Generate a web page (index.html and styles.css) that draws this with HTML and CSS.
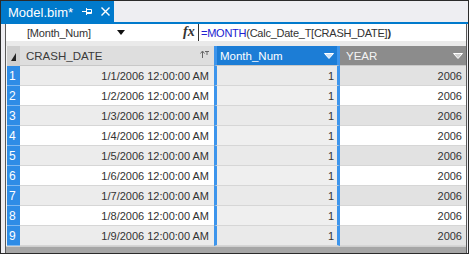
FILE: index.html
```html
<!DOCTYPE html>
<html lang="en">
<head>
    <meta charset="UTF-8">
    <title>Model.bim</title>
    <link rel="stylesheet" href="styles.css">
</head>
<body>
    <div class="window">
        <div class="tabstrip">
            <div class="tab">
                <span class="tab-title">Model.bim*</span>
                <svg class="pin" width="10" height="9" viewBox="0 0 10 9">
                    <path d="M0 4.5H4M4.5 1V8M4.5 2.5H9.5V6.5H4.5M5 5.5H9.5" stroke="#fff" stroke-width="1" fill="none"/>
                </svg>
                <svg class="close" width="9" height="9" viewBox="0 0 9 9">
                    <path d="M0.5 0.5L8.5 8.5M8.5 0.5L0.5 8.5" stroke="#fff" stroke-width="1.4"/>
                </svg>
            </div>
        </div>
        <div class="tabline"></div>
        <div class="sheet">
            <div class="formula-bar">
                <div class="name-box">
                    <span>[Month_Num]</span>
                    <svg width="8" height="5" viewBox="0 0 8 5"><path d="M0 0H8L4 5Z" fill="#111"/></svg>
                </div>
                <div class="fx">fx</div>
                <div class="formula"><span class="fn">=MONTH</span>(Calc_Date_T[CRASH_DATE]<b>)</b></div>
            </div>
            <div class="gap"></div>
            <div class="grid">
                <div class="row head">
                    <div class="rownum corner">
                        <svg width="5" height="8" viewBox="0 0 5 8"><path d="M5 0V8H0Z" fill="#222"/></svg>
                    </div>
                    <div class="cell col-date">CRASH_DATE
                        <svg class="sort" width="9" height="9" viewBox="0 0 9 9">
                            <path d="M2.5 8V1.5M0.5 3.5L2.5 1L4.5 3.5" stroke="#666" fill="none"/>
                            <path d="M5 1.5H9M7 1.5V5" stroke="#666" fill="none"/>
                        </svg>
                    </div>
                    <div class="cell col-month">Month_Num
                        <svg class="drop" width="10" height="6" viewBox="0 0 10 6"><path d="M0.5 0.5H9.5L5 5.5Z" fill="#cfe3f7" stroke="#fff"/></svg>
                    </div>
                    <div class="cell col-year">YEAR
                        <svg class="drop" width="10" height="6" viewBox="0 0 10 6"><path d="M0.5 0.5H9.5L5 5.5Z" fill="#d0d0d0" stroke="#fff"/></svg>
                    </div>
                </div>
                <div class="row odd"><div class="rownum">1</div><div class="cell col-date">1/1/2006 12:00:00 AM</div><div class="cell col-month">1</div><div class="cell col-year">2006</div></div>
                <div class="row"><div class="rownum">2</div><div class="cell col-date">1/2/2006 12:00:00 AM</div><div class="cell col-month">1</div><div class="cell col-year">2006</div></div>
                <div class="row odd"><div class="rownum">3</div><div class="cell col-date">1/3/2006 12:00:00 AM</div><div class="cell col-month">1</div><div class="cell col-year">2006</div></div>
                <div class="row"><div class="rownum">4</div><div class="cell col-date">1/4/2006 12:00:00 AM</div><div class="cell col-month">1</div><div class="cell col-year">2006</div></div>
                <div class="row odd"><div class="rownum">5</div><div class="cell col-date">1/5/2006 12:00:00 AM</div><div class="cell col-month">1</div><div class="cell col-year">2006</div></div>
                <div class="row"><div class="rownum">6</div><div class="cell col-date">1/6/2006 12:00:00 AM</div><div class="cell col-month">1</div><div class="cell col-year">2006</div></div>
                <div class="row odd"><div class="rownum">7</div><div class="cell col-date">1/7/2006 12:00:00 AM</div><div class="cell col-month">1</div><div class="cell col-year">2006</div></div>
                <div class="row"><div class="rownum">8</div><div class="cell col-date">1/8/2006 12:00:00 AM</div><div class="cell col-month">1</div><div class="cell col-year">2006</div></div>
                <div class="row odd"><div class="rownum">9</div><div class="cell col-date">1/9/2006 12:00:00 AM</div><div class="cell col-month">1</div><div class="cell col-year">2006</div></div>
            </div>
            <div class="scrollbar"></div>
        </div>
    </div>
</body>
</html>
```

FILE: styles.css
```css
body {
    margin: 0;
    font-family: "Liberation Sans", Arial, sans-serif;
    background: #fff;
}
.window {
    width: 469px;
    height: 254px;
    box-sizing: border-box;
    border: 1px solid #2b2b2b;
    background: #eeeef2;
    display: flex;
    flex-direction: column;
}
.tabstrip {
    height: 21px;
    display: flex;
}
.tab {
    width: 113px;
    background: #007acc;
    color: #fff;
    display: flex;
    align-items: center;
    font-size: 13px;
    padding-left: 7px;
    box-sizing: border-box;
}
.tab-title {
    margin-right: 9px;
    margin-top: 1px;
}
.pin {
    margin-right: 9px;
}
.tabline {
    height: 2px;
    background: #007acc;
}
.sheet {
    flex: 1;
    margin: 0 1px 0 4px;
    border-left: 1px solid #5a5a5a;
    border-right: 1px solid #5a5a5a;
    display: flex;
    flex-direction: column;
}
.formula-bar {
    height: 17px;
    background: #fff;
    display: flex;
    align-items: center;
    font-size: 11px;
    color: #333;
}
.name-box {
    width: 172px;
    display: flex;
    align-items: center;
    padding-left: 21px;
    box-sizing: border-box;
    letter-spacing: -0.2px;
}
.name-box svg {
    margin-left: 26px;
}
.fx {
    font-family: "Liberation Serif", serif;
    font-style: italic;
    font-weight: bold;
    font-size: 14px;
    color: #333;
    width: 21px;
    box-sizing: border-box;
    padding-left: 5px;
    border-right: 1px solid #333;
    height: 17px;
    line-height: 16px;
}
.formula {
    padding-left: 2px;
    font-size: 11px;
    color: #333;
    letter-spacing: -0.25px;
}
.formula .fn {
    color: #2020d0;
}
.formula b {
    font-weight: bold;
}
.gap {
    height: 5px;
    background: #eaeaea;
}
.grid {
    padding-left: 1px;
    background: #f4f4f4;
}
.row {
    display: flex;
    height: 20px;
    font-size: 11px;
    color: #333;
    background: #fff;
}
.row.odd {
    background: #ececec;
}
.rownum {
    width: 13px;
    background: #2e8ce6;
    color: #fff;
    font-size: 12px;
    padding-left: 2px;
    box-sizing: border-box;
    line-height: 21px;
    border-bottom: 1px solid #7fb8f0;
}
.cell {
    box-sizing: border-box;
    border-bottom: 1px solid #d6d6d6;
    line-height: 20px;
    text-align: right;
    padding-right: 5px;
    white-space: nowrap;
}
.col-date {
    width: 194px;
}
.col-month {
    width: 126px;
    border-left: 3px solid #3d95ec;
    border-right: 3px solid #3d95ec;
    background: #efefef;
    padding-right: 3px;
}
.row.odd .col-month {
    background: #eaeaea;
}
.col-year {
    width: 126px;
    padding-right: 4px;
}
.row.odd .col-year {
    background: #e2e2e2;
}
.row.head {
    font-size: 11.5px;
}
.head .corner {
    background: #cfcfcf;
    display: flex;
    align-items: center;
    justify-content: center;
    padding: 2px 0 0 0;
    border-bottom: none;
}
.head .cell {
    text-align: left;
    padding-left: 6px;
    display: flex;
    align-items: center;
    justify-content: space-between;
    border-bottom: 1px solid #c8c8c8;
}
.head .col-date {
    background: #dedede;
    color: #3a3a3a;
}
.head .col-month {
    background: #1c7dd6;
    color: #fff;
    padding-left: 3px;
}
.head .col-year {
    background: #8c8c8c;
    color: #f4f4f4;
    padding-right: 3px;
}
.sort {
    margin-top: -2px;
}
.scrollbar {
    flex: 1;
    background: #a6a6a6;
    border-top: 1px solid #cfcfcf;
}
```
